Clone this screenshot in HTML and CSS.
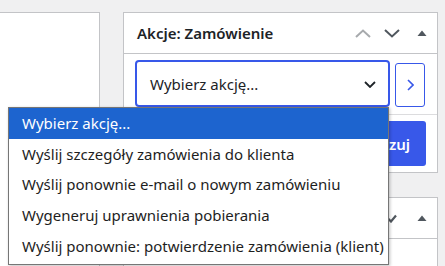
FILE: index.html
```html
<!DOCTYPE html>
<html lang="pl">
<head>
    <meta charset="UTF-8">
    <meta name="viewport" content="width=device-width, initial-scale=1.0">
    <title>Zamówienie</title>
    <link rel="stylesheet" href="styles.css">
</head>
<body>
    <div class="page">
        <div class="main-panel"></div>
        <div class="sidebar">
            <div class="postbox">
                <div class="postbox-header">
                    <h2>Akcje: Zamówienie</h2>
                    <div class="handle-actions">
                        <svg class="arrow arrow-up" width="16" height="9" viewBox="0 0 16 9"><path d="M1 8 L8 1.5 L15 8" fill="none" stroke="currentColor" stroke-width="2"/></svg>
                        <svg class="arrow arrow-down" width="16" height="9" viewBox="0 0 16 9"><path d="M1 1 L8 7.5 L15 1" fill="none" stroke="currentColor" stroke-width="2"/></svg>
                        <svg class="toggle" width="10" height="6" viewBox="0 0 10 6"><path d="M0.5 6 L5 0.5 L9.5 6 Z" fill="currentColor"/></svg>
                    </div>
                </div>
                <div class="postbox-inside">
                    <div class="action-row">
                        <div class="select">
                            <span>Wybierz akcję...</span>
                            <svg width="12" height="7" viewBox="0 0 12 7"><path d="M1 1 L6 6 L11 1" fill="none" stroke="currentColor" stroke-width="1.8"/></svg>
                        </div>
                        <button class="go-button" type="button">
                            <svg width="7" height="12" viewBox="0 0 7 12"><path d="M1 1 L6 6 L1 11" fill="none" stroke="currentColor" stroke-width="1.6"/></svg>
                        </button>
                    </div>
                </div>
                <div class="postbox-footer">
                    <button class="save-button" type="button">Aktualizuj</button>
                </div>
            </div>
            <div class="postbox">
                <div class="postbox-header">
                    <h2></h2>
                    <div class="handle-actions">
                        <svg class="arrow arrow-up" width="16" height="9" viewBox="0 0 16 9"><path d="M1 8 L8 1.5 L15 8" fill="none" stroke="currentColor" stroke-width="2"/></svg>
                        <svg class="check" width="16" height="9" viewBox="0 0 16 9"><path d="M4 4.5 L7 7.5 L12 1.5" fill="none" stroke="currentColor" stroke-width="2.2"/></svg>
                        <svg class="toggle" width="10" height="6" viewBox="0 0 10 6"><path d="M0.5 6 L5 0.5 L9.5 6 Z" fill="currentColor"/></svg>
                    </div>
                </div>
                <div class="postbox-inside tall"></div>
            </div>
        </div>
    </div>

    <ul class="dropdown">
        <li class="selected">Wybierz akcję...</li>
        <li>Wyślij szczegóły zamówienia do klienta</li>
        <li>Wyślij ponownie e-mail o nowym zamówieniu</li>
        <li>Wygeneruj uprawnienia pobierania</li>
        <li>Wyślij ponownie: potwierdzenie zamówienia (klient)</li>
    </ul>
</body>
</html>
```

FILE: styles.css
```css
* {
    margin: 0px;
    padding: 0px;
    box-sizing: border-box;
}
body {
    width: 445px;
    height: 266px;
    overflow: hidden;
    background-color: #f0f0f1;
    font-family: "Noto Sans", "Open Sans", sans-serif;
    color: #1d2327;
}
.page {
    display: flex;
    padding-top: 12px;
    gap: 23px;
}
.main-panel {
    width: 100px;
    height: 254px;
    background-color: white;
    border: 1px solid #c3c4c7;
    border-left: none;
    border-bottom: none;
}
.sidebar {
    width: 315px;
    display: flex;
    flex-direction: column;
    gap: 24px;
}
.postbox {
    background-color: white;
    border: 1px solid #c3c4c7;
}
.postbox-header {
    height: 41px;
    display: flex;
    align-items: center;
    justify-content: space-between;
    border-bottom: 1px solid #c3c4c7;
    padding: 0 10px 0 13px;
}
.postbox-header h2 {
    font-size: 15px;
    font-weight: 600;
    color: #1d2327;
}
.handle-actions {
    display: flex;
    align-items: center;
    gap: 13px;
}
.arrow-up {
    color: #a7aaad;
}
.arrow-down,
.check,
.toggle {
    color: #50575e;
}
.toggle {
    margin-left: 4px;
    margin-top: -1px;
}
.postbox-inside {
    padding: 6px 11px 7px 11px;
}
.postbox-inside.tall {
    height: 30px;
}
.action-row {
    display: flex;
    align-items: center;
    gap: 5px;
}
.select {
    width: 255px;
    height: 47px;
    border: 2px solid #3858e9;
    border-radius: 4px;
    display: flex;
    align-items: center;
    justify-content: space-between;
    padding: 0 12px 0 13px;
    font-size: 15px;
    color: #1d2327;
}
.select svg {
    color: #1d2327;
    margin-top: 2px;
}
.go-button {
    width: 30px;
    height: 44px;
    margin-top: 3px;
    background-color: white;
    border: 1px solid #3858e9;
    border-radius: 3px;
    color: #3858e9;
    display: flex;
    align-items: center;
    justify-content: center;
}
.postbox-footer {
    border-top: 1px solid #dcdcde;
    display: flex;
    justify-content: flex-end;
    padding: 6px 11px 6px 11px;
}
.save-button {
    height: 45px;
    padding: 0 16px;
    background-color: #3858e9;
    border: none;
    border-radius: 3px;
    color: white;
    font-family: "Noto Sans", sans-serif;
    font-size: 15px;
    font-weight: 600;
}
.dropdown {
    position: absolute;
    left: 8px;
    top: 107px;
    width: 381px;
    height: 158px;
    list-style: none;
    background-color: white;
    border: 1px solid #767676;
    box-shadow: 1px 1px 3px rgba(0, 0, 0, 0.25);
    font-size: 15px;
    color: #1e1e1e;
}
.dropdown li {
    height: 30.6px;
    display: flex;
    align-items: center;
    padding-left: 13px;
    white-space: nowrap;
}
.dropdown li.selected {
    background-color: #1d64cf;
    color: white;
}
```
